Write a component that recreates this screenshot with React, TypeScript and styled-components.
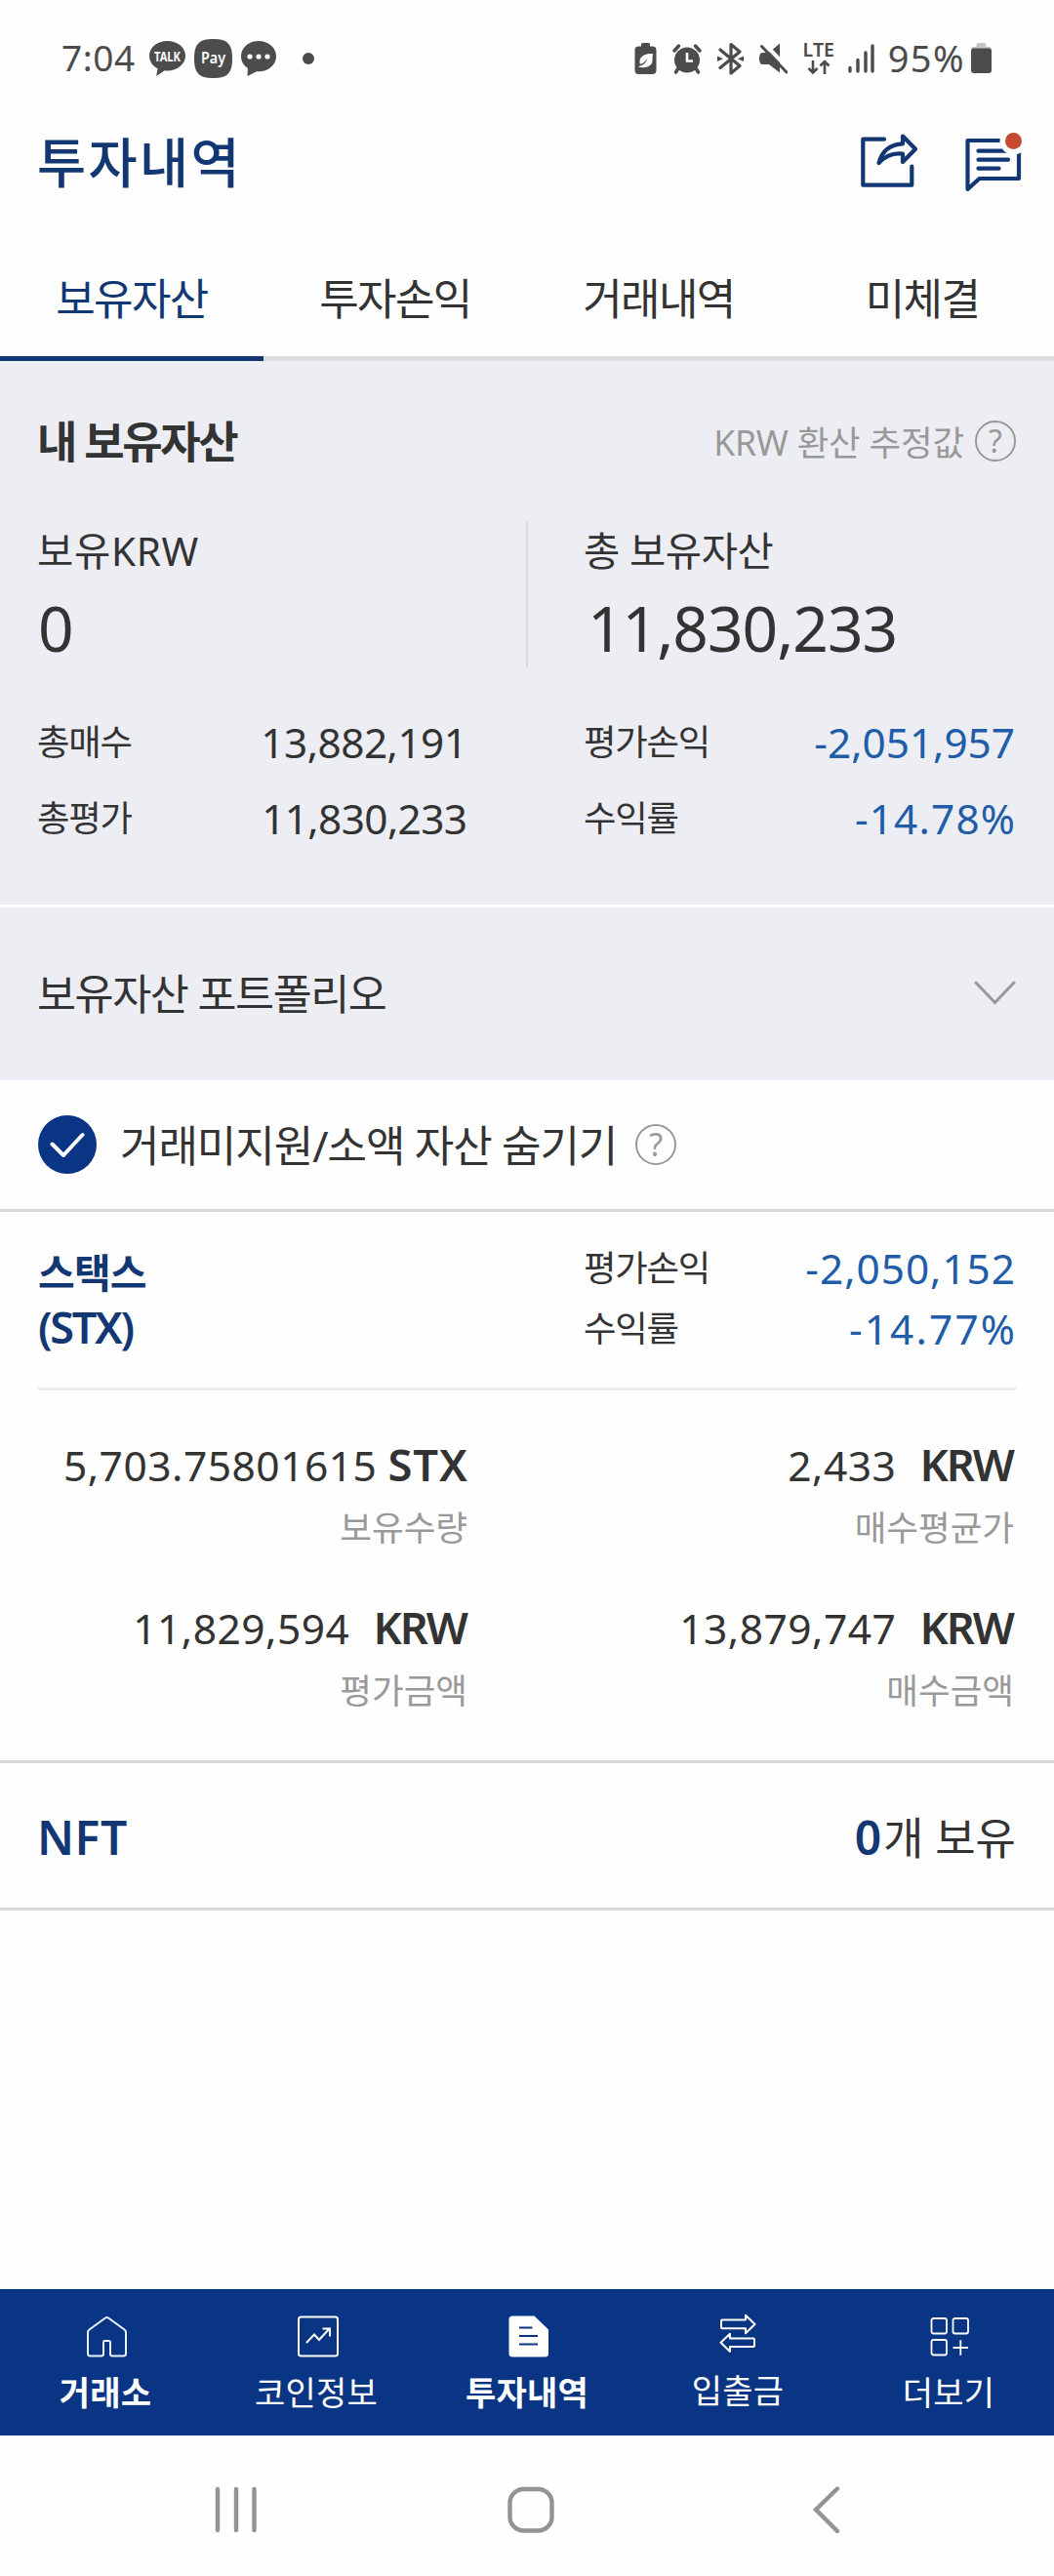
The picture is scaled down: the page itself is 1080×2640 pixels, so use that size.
import React from "react";
import styled, { createGlobalStyle } from "styled-components";

const navy = "#123773";
const brand = "#0a3585";
const ink = "#333333";
const muted = "#999999";
const loss = "#205ca8";
const status = "#4c4c4c";

const GlobalStyle = createGlobalStyle`
  * { box-sizing: border-box; }
  body { margin: 0; background: #fefefe; }
`;

const Screen = styled.div`
  display: flex;
  flex-direction: column;
  width: 1080px;
  height: 2640px;
  background: #fefefe;
  color: ${ink};
  font-family: "Noto Sans", "Noto Sans CJK KR", sans-serif;
  white-space: nowrap;
  overflow: hidden;
`;

const Text = styled.span<{ $size: number; $spacing?: number; $weight?: number; $color?: string; $lift?: number }>`
  padding-bottom: ${(p) => p.$lift ?? 0}px;
  font-size: ${(p) => p.$size}px;
  letter-spacing: ${(p) => p.$spacing ?? 0}px;
  font-weight: ${(p) => p.$weight ?? 400};
  color: ${(p) => p.$color ?? "inherit"};
`;

/* status bar */
const StatusBar = styled.div`
  display: flex;
  align-items: center;
  flex: none;
  height: 120px;
  padding: 0 63px;
  color: ${status};
`;
const Clock = styled.span`
  width: 90px;
  padding-bottom: 3px;
  font-size: 37px;
  letter-spacing: 0.6px;
`;
const Notices = styled.div`
  display: flex;
  align-items: center;
  gap: 9px;
`;
const Dot = styled.span`
  width: 12px;
  height: 12px;
  margin-left: 18px;
  border-radius: 50%;
  background: ${status};
`;
const Indicators = styled.div`
  display: flex;
  align-items: center;
  gap: 16px;
  margin-left: auto;
`;
const NetworkGroup = styled.div`
  display: flex;
  gap: 13px;
  margin-left: 1px;
`;
const BatteryGroup = styled.div`
  display: flex;
  align-items: center;
  gap: 6px;
  margin: 0 1px 0 -2px;
`;
const Percent = styled.span`
  padding-bottom: 3px;
  font-size: 38px;
  letter-spacing: 1.4px;
`;

/* header */
const Header = styled.header`
  display: flex;
  align-items: center;
  justify-content: space-between;
  flex: none;
  height: 94px;
  padding: 0 31px 0 38px;
`;
const Actions = styled.div`
  display: flex;
  gap: 45px;
`;

const Tabs = styled.nav`
  display: grid;
  grid-template-columns: repeat(4, 1fr);
  flex: none;
  height: 156px;
`;
const Tab = styled.div<{ $active?: boolean }>`
  display: flex;
  align-items: center;
  justify-content: center;
  padding-top: 28px;
  border-bottom: 5px solid ${(p) => (p.$active ? navy : "#dbdcde")};
  color: ${(p) => (p.$active ? navy : ink)};
  font-size: 44px;
  letter-spacing: -1.6px;
`;

/* summary */
const Summary = styled.section`
  flex: none;
  height: 560px;
  padding: 52px 39px 0 38px;
  border-bottom: 3px solid #ffffff;
  background: #edeef4;
`;
const SummaryHead = styled.div`
  display: flex;
  align-items: center;
  justify-content: space-between;
  height: 60px;
`;
const Estimate = styled.div`
  display: flex;
  align-items: center;
  gap: 11px;
`;
const Totals = styled.div`
  display: grid;
  grid-template-columns: 501px 1fr;
  grid-template-rows: 149px;
  height: 149px;
  margin-top: 53px;
`;
const Total = styled.div<{ $divided?: boolean }>`
  display: flex;
  flex-direction: column;
  height: 149px;
  padding-left: ${(p) => (p.$divided ? 57 : 0)}px;
  border-left: ${(p) => (p.$divided ? "2px solid #d9dade" : "0")};
`;
const TotalLabel = styled.span<{ $spacing?: number }>`
  flex: none;
  height: 60px;
  line-height: 60px;
  font-size: 40.5px;
  letter-spacing: ${(p) => p.$spacing ?? 0}px;
`;
const TotalValue = styled.span<{ $inset?: number }>`
  flex: none;
  height: 88px;
  padding-left: ${(p) => p.$inset ?? 0}px;
  line-height: 98px;
  font-size: 64px;
  font-weight: 450;
  letter-spacing: -1px;
`;
const StatGrid = styled.div`
  display: grid;
  grid-template-columns: 441px 442px;
  column-gap: 119px;
  margin-top: 37px;
`;
const Stat = styled.div<{ $height: number }>`
  display: flex;
  align-items: center;
  justify-content: space-between;
  height: ${(p) => p.$height}px;
`;
const StatLabel = styled.span`
  padding-bottom: 3px;
  font-size: 36.4px;
  letter-spacing: -1.2px;
`;
const StatValue = styled.span<{ $loss?: boolean; $spacing?: number }>`
  margin-right: ${(p) => -(p.$spacing ?? 0)}px;
  color: ${(p) => (p.$loss ? loss : ink)};
  font-size: 42.3px;
  letter-spacing: ${(p) => p.$spacing ?? 0}px;
`;

const Portfolio = styled.section`
  display: flex;
  align-items: center;
  justify-content: space-between;
  flex: none;
  height: 177px;
  padding: 0 39px 0 38px;
  background: #edeef4;
`;

const FilterRow = styled.section`
  display: flex;
  align-items: center;
  flex: none;
  height: 135px;
  padding-left: 39px;
  border-bottom: 3px solid #d9d9d9;
`;
const Check = styled.span`
  display: flex;
  align-items: center;
  justify-content: center;
  width: 60px;
  height: 60px;
  margin-right: 24px;
  border-radius: 50%;
  background: ${brand};
`;
const Help = styled.span<{ $gap?: number }>`
  display: flex;
  align-items: center;
  justify-content: center;
  width: 42px;
  height: 42px;
  margin-left: ${(p) => p.$gap ?? 0}px;
  border: 2.5px solid #999999;
  border-radius: 50%;
  color: #999999;
  font-size: 32px;
  line-height: 36px;
`;

/* asset */
const Asset = styled.section`
  flex: none;
  height: 565px;
  padding: 0 39px;
  border-bottom: 3px solid #d9d9d9;
`;
const AssetHead = styled.div`
  display: grid;
  grid-template-columns: 1fr 442px;
  height: 183px;
  padding-right: 1px;
  border-bottom: 3px solid #ebebeb;
`;
const AssetName = styled.div`
  display: flex;
  flex-direction: column;
  padding-top: 35px;
  line-height: 55px;
  color: ${navy};
`;
const AssetStats = styled.div`
  padding-top: 26px;
`;
const Details = styled.div`
  display: grid;
  grid-template-columns: 440px 560px;
  row-gap: 37px;
  padding-top: 43px;
`;
const Detail = styled.div`
  display: flex;
  flex-direction: column;
  align-items: flex-end;
  line-height: 66px;
`;
const DetailLabel = styled.span`
  margin-top: -2px;
  color: ${muted};
  font-size: 35.5px;
`;
const Amount = styled.div<{ $gap: number }>`
  display: flex;
  align-items: baseline;
  gap: ${(p) => p.$gap}px;
  height: 66px;
`;
const Unit = styled.span<{ $spacing: number }>`
  margin-right: ${(p) => (p.$spacing < 0 ? 1 : -1)}px;
  font-size: 45.3px;
  font-weight: 600;
  letter-spacing: ${(p) => p.$spacing}px;
`;

const NftRow = styled.section`
  display: flex;
  align-items: center;
  justify-content: space-between;
  flex: none;
  height: 151px;
  padding: 2px 39px 0 38px;
  border-bottom: 3px solid #d9d9d9;
`;
const Held = styled.div`
  display: flex;
  align-items: baseline;
  gap: 2px;
`;

const Filler = styled.div`
  flex: 1;
`;

/* bottom navigation */
const BottomNav = styled.nav`
  display: grid;
  grid-template-columns: repeat(5, 1fr);
  flex: none;
  height: 150px;
  background: ${brand};
  color: #ffffff;
`;
const NavItem = styled.div<{ $raise?: boolean }>`
  display: flex;
  flex-direction: column;
  align-items: center;
  gap: ${(p) => (p.$raise ? 13 : 15)}px;
  padding-top: 25px;
`;
const NavLabel = styled.span<{ $bold?: boolean }>`
  line-height: 40px;
  font-size: 34px;
  font-weight: ${(p) => (p.$bold ? 700 : 400)};
  letter-spacing: 0.2px;
`;
const SystemNav = styled.div`
  display: flex;
  align-items: center;
  gap: 252px;
  flex: none;
  height: 144px;
  padding: 8px 0 0 217px;
`;

const TalkIcon = () => (
  <svg width="37" height="36" viewBox="0 0 37 36">
    <path fill={status} d="M18.5 0C8.3 0 0 6.6 0 15.2c0 5.600 3.300 10.300 8.500 13L7.200 36l8.500-5.800c1 .1 1.900.2 2.800.2 10.200 0 18.500-6.600 18.500-15.200S28.700 0 18.500 0z" />
    <text x="5" y="20.500" fontSize="13.500" fontWeight="700" fill="#fff" textLength="27" lengthAdjust="spacingAndGlyphs">TALK</text>
  </svg>
);
const PayIcon = () => (
  <svg width="39" height="40" viewBox="0 0 39 40">
    <path fill={status} d="M19.500 0C34 0 39 5 39 20s-5 20-19.500 20S0 35 0 20 5 0 19.500 0z" />
    <text x="7" y="25" fontSize="15.500" fontWeight="600" fill="#fff" textLength="25" lengthAdjust="spacingAndGlyphs">Pay</text>
  </svg>
);
const MessageIcon = () => (
  <svg width="36" height="36" viewBox="0 0 36 36">
    <path fill={status} d="M18 0C8 0 0 6.800 0 15.700c0 5 2.600 9.300 6.900 12.100L6.500 36l9.500-4.700h2c10 0 18-6.800 18-15.600S28 0 18 0z" />
    <g fill="#fff"><circle cx="9" cy="16" r="2.600" /><circle cx="18" cy="16" r="2.600" /><circle cx="27" cy="16" r="2.600" /></g>
  </svg>
);
const PowerSaveIcon = () => (
  <svg width="23" height="34" viewBox="0 0 23 34">
    <path fill={status} d="M7 2.500Q7 1 8.500 1h6Q16 1 16 2.500V4.500h2.500a4 4 0 0 1 4 4V29a4 4 0 0 1-4 4h-14a4 4 0 0 1-4-4V8.500a4 4 0 0 1 4-4H7z" />
    <path fill="#fefefe" d="M19 12c-7-.5-13 2-13.500 7.500-.1 1.400.1 2.400.4 3.300C8.500 22.500 11 20.500 13.500 17c-1.500 4.500-5 7.500-10 8.200 6.500 2.300 14.500.3 15-5.700.2-2.500 0-5 .5-7.500z" />
  </svg>
);
const AlarmIcon = () => (
  <svg width="30" height="34" viewBox="0 0 30 34">
    <g stroke={status} strokeLinecap="round" strokeWidth="3.400" fill="none">
      <path d="M2 9l4.500-5M28 9l-4.500-5M6 27l-2.500 4M24 27l2.500 4" />
    </g>
    <circle cx="15" cy="18.500" r="13" fill={status} />
    <path d="M15 11v8.500h6" fill="none" stroke="#fefefe" strokeWidth="2.600" />
  </svg>
);
const BluetoothIcon = () => (
  <svg width="27" height="34" viewBox="0 0 27 34">
    <path d="M3 8l20 16.500L14 32V2.500L23 10 3 26.500" fill="none" stroke={status} strokeWidth="3.200" strokeLinejoin="round" strokeLinecap="round" />
    <path d="M0 14.500l6 2.800-6 2.800zM27 14.500l-6 2.800 6 2.800z" fill={status} />
  </svg>
);
const MuteIcon = () => (
  <svg width="29" height="34" viewBox="0 0 29 34">
    <path fill={status} d="M3 11h7l11-9.500v30L10 23H3q-3-.5-3-6t3-6z" />
    <path d="M5 1.500l25 26" stroke="#fefefe" strokeWidth="4" />
    <path d="M2.500 4.500L28 31" stroke={status} strokeWidth="3" strokeLinecap="round" />
  </svg>
);
const LteIcon = () => (
  <svg width="32" height="34" viewBox="0 0 32 34" overflow="visible">
    <text x="-1.500" y="15" fontSize="19.500" fontWeight="600" fill={status} textLength="32.500">LTE</text>
    <path d="M9 19v12M4.500 27l4.500 4.500 4.500-4.500M21 33V20M16.500 24.500l4.500-4.500 4.500 4.500" fill="none" stroke={status} strokeWidth="2.600" />
  </svg>
);
const SignalIcon = () => (
  <svg width="27" height="34" viewBox="0 0 27 34">
    <path d="M2 26.500V30M10 18.500V30M18 11V30M25 4V30" stroke={status} strokeWidth="3.400" strokeLinecap="round" />
  </svg>
);
const BatteryIcon = () => (
  <svg width="21" height="34" viewBox="0 0 21 34">
    <rect x="5.500" y="1" width="10" height="7" rx="2" fill="#c4c4c4" />
    <rect x="0" y="5" width="21" height="6" rx="2.500" fill="#c4c4c4" />
    <rect x="0" y="6.500" width="21" height="25.500" rx="3" fill={status} />
  </svg>
);

const ShareIcon = () => (
  <svg width="62" height="62" viewBox="0 0 62 62" fill="none" stroke={navy} strokeWidth="4.200" strokeLinecap="round" strokeLinejoin="round">
    <path d="M26 6.700H4.300v47h50V34.500" />
    <path d="M45 3.500L58 16.700 45 30v-8.300C36 20.500 28 23 20.500 31 23.500 19.500 31.500 12 45 11.300z" />
  </svg>
);
const InboxIcon = () => (
  <svg width="62" height="62" viewBox="0 0 62 62">
    <g fill="none" stroke={navy} strokeWidth="4.200" strokeLinecap="round" strokeLinejoin="round">
      <path d="M40 8H4.500v50l12-11H57V19" />
      <path d="M15.500 18.700H44M15.500 27.700h30.500M15.500 36.700h21" />
    </g>
    <circle cx="51.500" cy="8.500" r="14" fill="#fefefe" />
    <circle cx="51.500" cy="8.500" r="8.500" fill="#c44a30" />
  </svg>
);

const HomeIcon = () => (
  <svg width="46" height="46" viewBox="0 0 46 46" fill="none" stroke="#eaf6ff" strokeWidth="2" strokeLinejoin="round">
    <path d="M7.500 43.500a2.500 2.500 0 0 1-2.500-2.500V19.500q0-2 1.500-3L23 4.500q1.500-1 3 0l16.500 12q1.500 1 1.500 3V41a2.500 2.500 0 0 1-2.500 2.500H30a2 2 0 0 1-2-2V30q0-2-1.500-2h-4Q21 28 21 30v11.500a2 2 0 0 1-2 2z" />
  </svg>
);
const ChartIcon = () => (
  <svg width="46" height="46" viewBox="0 0 46 46" fill="none" stroke="#fff" strokeWidth="2">
    <rect x="5" y="3.500" width="40" height="40" rx="2.500" />
    <path d="M13 30l8-8.500 5 5.500 10.500-11.500M29.500 15.500H37v8" />
  </svg>
);
const DocumentIcon = () => (
  <svg width="46" height="46" viewBox="0 0 46 46">
    <path fill="#fff" d="M8 2.500h22.500L45 16.500V41a3.500 3.500 0 0 1-3.500 3.500H8A3.500 3.500 0 0 1 4.500 41V6A3.500 3.500 0 0 1 8 2.500z" />
    <path d="M15 14.500h13.500M15 23h19M15 31.500h19" stroke={brand} strokeWidth="2.200" />
  </svg>
);
const TransferIcon = () => (
  <svg width="46" height="46" viewBox="0 0 46 46" fill="none" stroke="#fff" strokeWidth="2" strokeLinejoin="round">
    <path d="M7 6.500h24V1.800l9.500 9.200-9.500 9.200v-5H7q-1 0-1-1V7.500q0-1 1-1z" />
    <path d="M39 34H15v5L5.500 29.800 15 20.800V25.500h24q1 0 1 1V33q0 1-1 1z" />
  </svg>
);
const MoreIcon = () => (
  <svg width="46" height="46" viewBox="0 0 46 46" fill="none" stroke="#fff" strokeWidth="1.800">
    <rect x="5.500" y="5" width="15.500" height="15.500" rx="2" />
    <rect x="27.500" y="5" width="15.500" height="15.500" rx="2" />
    <rect x="5.500" y="27" width="15.500" height="15.500" rx="2" />
    <path d="M27.500 35H43M35.300 27.200v15.500" />
  </svg>
);

const tabs = ["보유자산", "투자손익", "거래내역", "미체결"];
const summaryStats = [
  { label: "총매수", value: "13,882,191", spacing: -0.5 },
  { label: "평가손익", value: "-2,051,957", spacing: 0, loss: true },
  { label: "총평가", value: "11,830,233", spacing: -0.6 },
  { label: "수익률", value: "-14.78%", spacing: 1.2, loss: true },
];
const assetStats = [
  { label: "평가손익", value: "-2,050,152", spacing: 1 },
  { label: "수익률", value: "-14.77%", spacing: 2.2 },
];
const details = [
  { value: "5,703.75801615", unit: "STX", label: "보유수량", gap: 11, unitSpacing: 1 },
  { value: "2,433", unit: "KRW", label: "매수평균가", gap: 24, unitSpacing: -2 },
  { value: "11,829,594", unit: "KRW", label: "평가금액", gap: 24, unitSpacing: -2 },
  { value: "13,879,747", unit: "KRW", label: "매수금액", gap: 24, unitSpacing: -2 },
];
const navItems = [
  { label: "거래소", icon: <HomeIcon />, bold: true },
  { label: "코인정보", icon: <ChartIcon /> },
  { label: "투자내역", icon: <DocumentIcon />, bold: true },
  { label: "입출금", icon: <TransferIcon />, raise: true },
  { label: "더보기", icon: <MoreIcon /> },
];

export default function App() {
  return (
    <Screen>
      <GlobalStyle />
      <StatusBar>
        <Clock>7:04</Clock>
        <Notices>
          <TalkIcon />
          <PayIcon />
          <MessageIcon />
          <Dot />
        </Notices>
        <Indicators>
          <PowerSaveIcon />
          <AlarmIcon />
          <BluetoothIcon />
          <MuteIcon />
          <NetworkGroup>
            <LteIcon />
            <SignalIcon />
          </NetworkGroup>
          <BatteryGroup>
            <Percent>95%</Percent>
            <BatteryIcon />
          </BatteryGroup>
        </Indicators>
      </StatusBar>

      <Header>
        <Text $size={54.5} $spacing={2.4} $weight={500} $color={navy} $lift={8}>투자내역</Text>
        <Actions>
          <ShareIcon />
          <InboxIcon />
        </Actions>
      </Header>

      <Tabs>
        {tabs.map((t, i) => (
          <Tab key={t} $active={i === 0}>{t}</Tab>
        ))}
      </Tabs>

      <Summary>
        <SummaryHead>
          <Text $size={45} $spacing={-2.4} $weight={700} $lift={3}>내 보유자산</Text>
          <Estimate>
            <Text $size={35.5} $spacing={-0.2} $color={muted} $lift={2}>KRW 환산 추정값</Text>
            <Help>?</Help>
          </Estimate>
        </SummaryHead>
        <Totals>
          <Total>
            <TotalLabel $spacing={0.7}>보유KRW</TotalLabel>
            <TotalValue $inset={1}>0</TotalValue>
          </Total>
          <Total $divided>
            <TotalLabel $spacing={-0.4}>총 보유자산</TotalLabel>
            <TotalValue $inset={4}>11,830,233</TotalValue>
          </Total>
        </Totals>
        <StatGrid>
          {summaryStats.map((s) => (
            <Stat key={s.label} $height={78}>
              <StatLabel>{s.label}</StatLabel>
              <StatValue $loss={s.loss} $spacing={s.spacing}>{s.value}</StatValue>
            </Stat>
          ))}
        </StatGrid>
      </Summary>

      <Portfolio>
        <Text $size={43.5} $spacing={-1.4} $lift={5}>보유자산 포트폴리오</Text>
        <svg width="44" height="26" viewBox="0 0 44 26" fill="none" stroke="#999" strokeWidth="3" strokeLinecap="round" overflow="visible">
          <path d="M3 1L22.500 21.500 42 1" />
        </svg>
      </Portfolio>

      <FilterRow>
        <Check>
          <svg width="36" height="30" viewBox="0 0 36 30" fill="none" stroke="#fff" strokeWidth="4" strokeLinecap="round" strokeLinejoin="round">
            <path d="M2.500 14.500L14 26 33.500 5" />
          </svg>
        </Check>
        <Text $size={44} $spacing={-1.05} $lift={3}>거래미지원/소액 자산 숨기기</Text>
        <Help $gap={19}>?</Help>
      </FilterRow>

      <Asset>
        <AssetHead>
          <AssetName>
            <Text $size={41} $spacing={-0.8} $weight={700}>스택스</Text>
            <Text $size={45} $spacing={-2.3} $weight={600}>(STX)</Text>
          </AssetName>
          <AssetStats>
            {assetStats.map((s) => (
              <Stat key={s.label} $height={62}>
                <StatLabel>{s.label}</StatLabel>
                <StatValue $loss $spacing={s.spacing}>{s.value}</StatValue>
              </Stat>
            ))}
          </AssetStats>
        </AssetHead>
        <Details>
          {details.map((d) => (
            <Detail key={d.label}>
              <Amount $gap={d.gap}>
                <Text $size={42.5} $spacing={0.5}>{d.value}</Text>
                <Unit $spacing={d.unitSpacing}>{d.unit}</Unit>
              </Amount>
              <DetailLabel>{d.label}</DetailLabel>
            </Detail>
          ))}
        </Details>
      </Asset>

      <NftRow>
        <Text $size={48} $spacing={0.5} $weight={600} $color={navy}>NFT</Text>
        <Held>
          <Text $size={48} $weight={600} $color={navy}>0</Text>
          <Text $size={45}>개 보유</Text>
        </Held>
      </NftRow>

      <Filler />

      <BottomNav>
        {navItems.map((n) => (
          <NavItem key={n.label} $raise={n.raise}>
            {n.icon}
            <NavLabel $bold={n.bold}>{n.label}</NavLabel>
          </NavItem>
        ))}
      </BottomNav>

      <SystemNav>
        <svg width="50" height="50" viewBox="0 0 50 50" stroke="#939393" strokeWidth="4.400" strokeLinecap="round">
          <path d="M6 4v42M25 4v42M43.500 4v42" />
        </svg>
        <svg width="50" height="50" viewBox="0 0 50 50" fill="none" stroke="#939393" strokeWidth="4.400">
          <rect x="3.500" y="4" width="43" height="42.500" rx="14" />
        </svg>
        <svg width="50" height="50" viewBox="0 0 50 50" fill="none" stroke="#939393" strokeWidth="4.400" strokeLinecap="round">
          <path d="M37 3.500L15 25l22 22" />
        </svg>
      </SystemNav>
    </Screen>
  );
}
